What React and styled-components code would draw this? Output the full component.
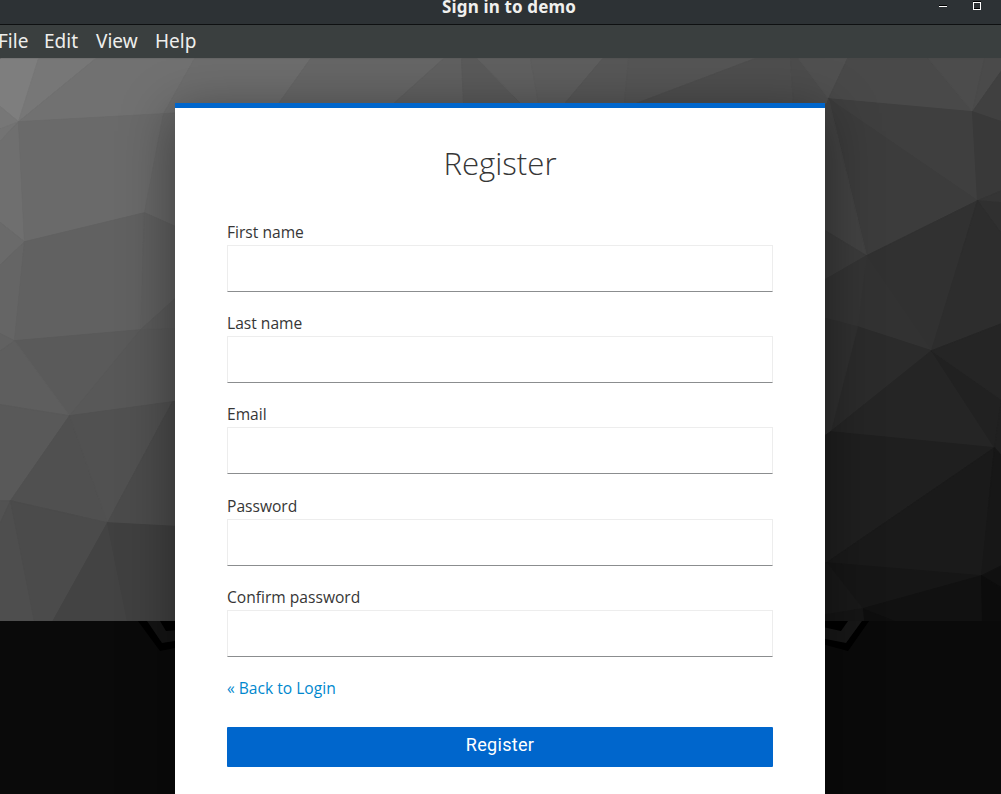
import React from "react";
import styled, { createGlobalStyle } from "styled-components";

const GlobalStyle = createGlobalStyle`
  *, *::before, *::after { box-sizing: border-box; }
  body { margin: 0; background: #090909; overflow: hidden; }
`;

const Window = styled.div`
  display: flex;
  flex-direction: column;
  width: 1001px;
  height: 794px;
  overflow: hidden;
  font-family: "Open Sans", sans-serif;
`;

const TitleBar = styled.header`
  display: grid;
  grid-template-columns: 1fr auto 1fr;
  flex: none;
  height: 25px;
  padding-left: 17px;
  background: #2d3235;
  border-bottom: 1px solid #0e1011;
`;

const WindowTitle = styled.h1`
  margin: -6px 0 0;
  font: 700 17px/25px "Noto Sans", sans-serif;
  letter-spacing: 0.15px;
  color: #f0f0ee;
  white-space: nowrap;
`;

const WindowControls = styled.div`
  display: flex;
  justify-content: flex-end;
  gap: 26px;
  padding: 1px 20px 0 0;
`;

const MenuBar = styled.nav`
  display: flex;
  flex: none;
  height: 33px;
  background: #3a3f3f;
`;

const MenuItem = styled.a`
  width: ${(p) => p.$width}px;
  margin-left: ${(p) => p.$offset || 0}px;
  font: 400 19px/33px "Noto Sans", sans-serif;
  color: #eeeeec;
  white-space: nowrap;
`;

const Stage = styled.main`
  display: grid;
  grid-template: 736px / 1001px;
  flex: none;
  overflow: hidden;
`;

const Backdrop = styled.svg`
  grid-area: 1 / 1;
  display: block;
`;

const Card = styled.section`
  grid-area: 1 / 1;
  z-index: 1;
  width: 650px;
  height: 760px;
  margin: 45px 0 0 175px;
  padding: 0 52px;
  background: #fff;
  border-top: 5px solid #06c;
  box-shadow: 0 10px 50px rgba(0, 0, 0, 0.4);
`;

const CardTitle = styled.h2`
  margin: 36px 0 43px;
  font-size: 31.2px;
  line-height: 38px;
  font-weight: 300;
  text-align: center;
  color: #363636;
`;

const Form = styled.form`
  display: flex;
  flex-direction: column;
`;

const Field = styled.div`
  display: flex;
  flex-direction: column;
  height: 91.2px;
`;

const Label = styled.label`
  height: 20px;
  font-size: 15.6px;
  line-height: 14px;
  color: #363636;
`;

const Input = styled.input`
  width: 100%;
  height: 47px;
  padding: 0 8px;
  border: 1px solid #ededed;
  border-bottom-color: #8b8d8f;
  border-radius: 0;
  outline: 0;
  background: #fff;
`;

const BackLink = styled.a`
  font-size: 15.6px;
  line-height: 20px;
  margin-top: -3px;
  color: #0088ce;
  text-decoration: none;
`;

const SubmitButton = styled.button`
  height: 40px;
  margin-top: 29px;
  padding: 0 0 4px;
  border: 0;
  border-radius: 1px;
  background: #06c;
  color: #fff;
  font: 400 18px/36px Roboto, sans-serif;
  letter-spacing: 0.3px;
`;

const facets = [
  ["0,58 38,58 18,121 0,106", "#7e7e7e"],
  ["38,58 95,58 18,121", "#777777"],
  ["95,58 194,58 163,113 18,121", "#717171"],
  ["0,106 18,121 0,128", "#777777"],
  ["0,128 18,121 0,140", "#737373"],
  ["0,140 18,121 24,241 0,222", "#6f6f6f"],
  ["18,121 163,113 144,212 24,241", "#6a6a6a"],
  ["0,222 24,241 0,264", "#6a6a6a"],
  ["0,264 24,241 14,340 0,333", "#656565"],
  ["0,333 14,340 0,350", "#616161"],
  ["24,241 144,212 140,329 14,340", "#616161"],
  ["194,58 310,58 278,103 163,113", "#6d6d6d"],
  ["163,113 200,111 200,237 144,212", "#666666"],
  ["144,212 200,237 200,275 140,329", "#5f5f5f"],
  ["140,329 200,275 200,327", "#5a5a5a"],
  ["14,340 140,329 69,415", "#5a5a5a"],
  ["140,329 200,327 200,397 69,415", "#585858"],
  ["0,350 14,340 69,415 0,404", "#5e5e5e"],
  ["0,404 69,415 10,500 0,500", "#595959"],
  ["69,415 107,522 10,500", "#505050"],
  ["69,415 172,401 107,522", "#515151"],
  ["0,500 10,500 0,522", "#525252"],
  ["0,522 10,500 34,621 0,621", "#4e4e4e"],
  ["10,500 107,522 52,621 34,621", "#4b4b4b"],
  ["172,401 200,397 200,527 107,522", "#4b4b4b"],
  ["107,522 127,621 52,621", "#434343"],
  ["107,522 200,527 200,621 127,621", "#404040"],
  ["310,58 443,58 393,103 278,103", "#666666"],
  ["443,58 461,58 463,103 393,103", "#606060"],
  ["461,58 477,58 521,103 463,103", "#5a5a5a"],
  ["477,58 530,58 538,103 521,103", "#606060"],
  ["530,58 602,58 564,103 538,103", "#5e5e5e"],
  ["602,58 628,58 624,103 564,103", "#575757"],
  ["628,58 754,58 635,103 624,103", "#555555"],
  ["754,58 790,58 793,103 635,103", "#4e4e4e"],
  ["790,58 798,58 828,98 825,103 793,103", "#4c4c4c"],
  ["798,58 847,58 828,98", "#505050"],
  ["847,58 928,58 972,111 828,98", "#494949"],
  ["928,58 984,58 972,111", "#4c4c4c"],
  ["984,58 1001,58 1001,70 972,111", "#4a4a4a"],
  ["1001,70 1001,121 972,111", "#404040"],
  ["828,98 972,111 977,200", "#3f3f3f"],
  ["972,111 1001,121 1001,190 977,200", "#393939"],
  ["828,98 977,200 866,255", "#3c3c3c"],
  ["828,98 866,255 800,215", "#424242"],
  ["866,255 800,215 800,293", "#3b3b3b"],
  ["977,200 1001,190 1001,202", "#353535"],
  ["977,200 1001,202 1001,233", "#303030"],
  ["866,255 977,200 931,350", "#313131"],
  ["977,200 1001,233 1001,323 931,350", "#2d2d2d"],
  ["866,255 931,350 857,326", "#323232"],
  ["866,255 857,326 800,311 800,293", "#343434"],
  ["857,326 931,350 830,431", "#2b2b2b"],
  ["800,311 857,326 830,431 800,452", "#303030"],
  ["931,350 994,447 830,431", "#252525"],
  ["931,350 1001,399 994,447", "#212121"],
  ["931,350 1001,323 1001,399", "#252525"],
  ["994,447 1001,399 1001,455", "#202020"],
  ["800,452 830,431 994,447 826,562 800,562", "#1f1f1f"],
  ["826,562 994,447 981,575", "#1a1a1a"],
  ["994,447 1001,455 1001,565 981,575", "#171717"],
  ["826,562 981,575 862,608", "#161616"],
  ["981,575 1001,565 1001,587", "#101010"],
  ["862,608 981,575 982,621 895,621", "#111111"],
  ["862,608 895,621 863,621", "#0e0e0e"],
  ["981,575 1001,587 1001,621 982,621", "#0c0c0c"],
  ["826,562 862,608 800,618 800,562", "#191919"],
  ["800,618 862,608 863,621 800,621", "#151515"],
];

const emblem = [
  ["138,621 160,651 200,643 200,621", "#000000"],
  ["147,621 162,643 200,637 200,621", "#141414"],
  ["160,621 166,631 200,628 200,621", "#000000"],
  ["869,621 848,651 800,638 800,621", "#000000"],
  ["862,621 846,643 800,634 800,621", "#171717"],
  ["848,621 841,631 800,622 800,621", "#000000"],
];

const fields = [
  { id: "firstName", label: "First name" },
  { id: "lastName", label: "Last name" },
  { id: "email", label: "Email" },
  { id: "password", label: "Password", type: "password" },
  { id: "passwordConfirm", label: "Confirm password", type: "password" },
];

function LowPolyBackdrop() {
  return (
    <Backdrop width="1001" height="736" viewBox="0 58 1001 736" aria-hidden="true">
      <rect x="0" y="58" width="1001" height="563" fill="#444" />
      <g transform="translate(0.5 0.7)">
        {facets.map(([points, fill]) => (
          <polygon key={points} points={points} fill={fill} stroke={fill} strokeWidth="1" />
        ))}
      </g>
      <rect x="0" y="621" width="1001" height="173" fill="#0a0a0a" />
      {emblem.map(([points, fill]) => (
        <polygon key={points} points={points} fill={fill} />
      ))}
    </Backdrop>
  );
}

export default function App() {
  return (
    <Window>
      <GlobalStyle />
      <TitleBar>
        <span />
        <WindowTitle>Sign in to demo</WindowTitle>
        <WindowControls>
          <svg width="8" height="10" viewBox="0 0 8 10" shapeRendering="crispEdges">
            <rect y="4" width="8" height="1" fill="#000" />
            <rect y="5" width="8" height="1" fill="#fff" />
          </svg>
          <svg width="8" height="10" viewBox="0 0 8 10" shapeRendering="crispEdges">
            <rect width="8" height="1" fill="#000" />
            <rect x="1" y="7" width="6" height="1" fill="#000" />
            <rect x="0.5" y="1.5" width="7" height="7" fill="none" stroke="#fff" />
          </svg>
        </WindowControls>
      </TitleBar>
      <MenuBar>
        <MenuItem $width={46} $offset={-2}>File</MenuItem>
        <MenuItem $width={52}>Edit</MenuItem>
        <MenuItem $width={59}>View</MenuItem>
        <MenuItem $width={50}>Help</MenuItem>
      </MenuBar>
      <Stage>
        <LowPolyBackdrop />
        <Card>
          <CardTitle>Register</CardTitle>
          <Form onSubmit={(e) => e.preventDefault()}>
            {fields.map(({ id, label, type = "text" }) => (
              <Field key={id}>
                <Label htmlFor={id}>{label}</Label>
                <Input id={id} type={type} />
              </Field>
            ))}
            <BackLink href="#">« Back to Login</BackLink>
            <SubmitButton type="submit">Register</SubmitButton>
          </Form>
        </Card>
      </Stage>
    </Window>
  );
}
